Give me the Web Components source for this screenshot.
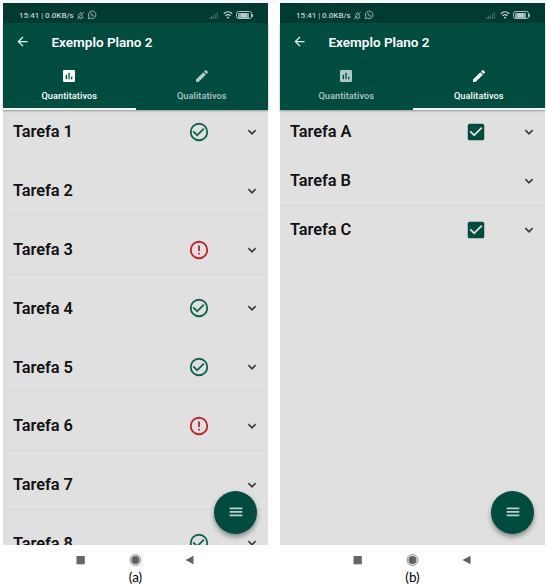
<!DOCTYPE html>
<html lang="pt-BR">
<head>
<meta charset="utf-8">
<title>Exemplo Plano 2</title>
<style>
html,body{margin:0;background:#fff;font-family:Roboto,"Liberation Sans",sans-serif}
body{width:546px;height:587px;overflow:hidden}
</style>
</head>
<body>
<phone-gallery>
  <phone-screen label="(a)" active="0">
    <task-row name="Tarefa 1" state="ok" class="first"></task-row>
    <task-row name="Tarefa 2" class="wide"></task-row>
    <task-row name="Tarefa 3" state="alert" class="wide"></task-row>
    <task-row name="Tarefa 4" state="ok" class="wide"></task-row>
    <task-row name="Tarefa 5" state="ok" class="wide"></task-row>
    <task-row name="Tarefa 6" state="alert" class="wide"></task-row>
    <task-row name="Tarefa 7" class="wide"></task-row>
    <task-row name="Tarefa 8" state="ok" class="wide"></task-row>
  </phone-screen>
  <phone-screen label="(b)" active="1">
    <task-row name="Tarefa A" state="box" class="first"></task-row>
    <task-row name="Tarefa B"></task-row>
    <task-row name="Tarefa C" state="box"></task-row>
  </phone-screen>
</phone-gallery>
<script>
const ICONS = {
  back: '<path d="M20 11H7.83l5.59-5.59L12 4l-8 8 8 8 1.41-1.41L7.83 13H20z"/>',
  chart: '<path d="M19 3H5a2 2 0 0 0-2 2v14a2 2 0 0 0 2 2h14a2 2 0 0 0 2-2V5a2 2 0 0 0-2-2zM9 17H7v-7h2zm4 0h-2V7h2zm4 0h-2v-4h2z"/>',
  pencil: '<path d="M3 17.25V21h3.75L17.81 9.94l-3.75-3.75zM20.71 7.04a1 1 0 0 0 0-1.41l-2.34-2.34a1 1 0 0 0-1.41 0l-1.83 1.83 3.75 3.75z"/>',
  ok: '<path d="M16.59 7.58 10 14.17l-3.59-3.58L5 12l5 5 8-8zM12 2a10 10 0 1 0 0 20 10 10 0 0 0 0-20zm0 18a8 8 0 1 1 0-16 8 8 0 0 1 0 16z"/>',
  alert: '<path d="M11 15h2v2h-2zm0-8h2v6h-2zM12 2a10 10 0 1 0 0 20 10 10 0 0 0 0-20zm0 18a8 8 0 1 1 0-16 8 8 0 0 1 0 16z"/>',
  box: '<path d="M19 3H5a2 2 0 0 0-2 2v14a2 2 0 0 0 2 2h14a2 2 0 0 0 2-2V5a2 2 0 0 0-2-2zm-9 14-5-5 1.41-1.41L10 14.17l7.59-7.59L19 8z"/>',
  chevron: '<path d="M7.41 8.59 12 13.17l4.59-4.58L18 10l-6 6-6-6z" stroke="currentColor" stroke-width=".5"/>',
  menu: '<path d="M2.500 5.200h19v2.700h-19zm0 5.300h19v2.700h-19zm0 5.300h19v2.700h-19z"/>',
  bell: '<g fill="none" stroke="currentColor" stroke-width="2"><path d="M5 18h15M7 18v-7a5 5 0 0 1 10 0v7M10 21h4M12 6V3M3 22 21 2"/></g>',
  whats: '<g fill="none" stroke="currentColor" stroke-width="2.2"><path d="M3 21l1.5-5a9 9 0 1 1 3.7 3.6z"/><path d="M9 8c-1 3 3 8 7 7l0-2-2-1-1 1c-1 0-2-2-2-2l1-1-1-2z" stroke-width="1.5"/></g>',
  signal: '<path d="M1 17h3v4H1zm5-3h3v7H6z"/><path opacity=".6" d="M11 11h3v10h-3zm5-4h3v14h-3zm5-4h3v18h-3z"/>',
  wifi: '<g fill="none" stroke="currentColor" stroke-width="3"><path d="M2 9c6-6 14-6 20 0M6 14c4-4 8-4 12 0"/></g><path d="M8.5 17.500q3.500-3 7 0L12 21z"/>',
};
function define(name, markup, setup) {
  customElements.define(name, class extends HTMLElement {
    connectedCallback() {
      if (this.shadowRoot) return;
      const t = document.createElement('template');
      t.innerHTML = markup;
      this.attachShadow({mode: 'open'}).append(t.content.cloneNode(true));
      if (setup) setup(this, this.shadowRoot);
    }
  });
}
define('ui-icon', `<style>:host{display:block;flex:none;width:16px;height:16px}svg{display:block;width:100%;height:100%;overflow:visible}</style><svg viewBox="0 0 24 24" fill="currentColor"></svg>`,
  (el, root) => { root.querySelector('svg').innerHTML = ICONS[el.getAttribute('name')] || ''; });

define('status-bar', `<style>
:host{display:flex;align-items:center;box-sizing:border-box;height:20px;padding:4px 15px 0 16px;background:#003a30;color:#c3d3cf;font-size:8px;font-weight:500;white-space:nowrap}
.clock{width:54px;letter-spacing:-.02px}.bell{width:9px;height:9px;margin-left:3px;opacity:.8}.wa{width:10px;height:10px;margin-left:2px;opacity:.85}
.sig{width:11px;height:9px;margin-left:auto;opacity:.5}.wifi{width:10px;height:10px;margin-left:4px}
.bat{box-sizing:border-box;width:16px;height:8px;margin-left:3px;border:1px solid #aac0bb;border-radius:2.5px;display:grid;place-items:center;padding:1px}
.bat span{background:#8ba9a3;width:11px;height:4.500px;color:#e2efeb;font-size:5px;line-height:5px;text-align:center}
.tip{width:1.500px;height:3px;background:#aac0bb}
</style><span class="clock">15:41 | 0.0KB/s</span><ui-icon class="bell" name="bell"></ui-icon><ui-icon class="wa" name="whats"></ui-icon>
<ui-icon class="sig" name="signal"></ui-icon><ui-icon class="wifi" name="wifi"></ui-icon><div class="bat"><span>66</span></div><i class="tip"></i>`);

define('tab-item', `<style>
:host{display:flex;flex:1;flex-direction:column;align-items:center;box-sizing:border-box;padding-top:8px;color:#b0c9c4;border-bottom:2px solid transparent;font-size:9.200px;line-height:12px;font-weight:500;letter-spacing:.06px}
:host([on]){color:#fff;border-color:#f2f6f5}
ui-icon{margin-bottom:6px}
</style><ui-icon></ui-icon><slot></slot>`, (el, root) => {
  const i = document.createElement('ui-icon');
  i.setAttribute('name', el.getAttribute('icon'));
  root.querySelector('ui-icon').replaceWith(i);
});

define('task-row', `<style>
:host{display:grid;grid-template-columns:184.5px 22px 1fr 16px;align-items:center;box-sizing:border-box;height:48.75px;padding:0 8.500px 0 10.500px;border-bottom:1px solid #dadada;color:#111}
:host(.first){height:47px;padding-bottom:3px}
:host(.wide){height:58.75px;padding-top:10px}
.name{font-size:16.400px;font-weight:600;line-height:20px;letter-spacing:-.07px;white-space:nowrap;padding-top:1px;margin-left:-.5px}
.state{display:grid;width:22px;height:22px;margin-left:-10.500px}
.state ui-icon{width:22px;height:22px}
.chev{grid-column:4;width:16px;height:16px;color:#333}
.ok{color:#0f6450}.alert{color:#c32129}.box{color:#004d3f}
</style><span class="name"></span><span class="state"></span><ui-icon class="chev" name="chevron"></ui-icon>`, (el, root) => {
  root.querySelector('.name').textContent = el.getAttribute('name');
  const s = el.getAttribute('state');
  if (s) root.querySelector('.state').innerHTML = `<ui-icon class="${s}" name="${s}"></ui-icon>`;
});

define('nav-bar', `<style>
:host{display:flex;align-items:center;justify-content:center;padding-top:6.500px;box-sizing:content-box}
svg{display:block;width:265px;height:14px;overflow:visible}
</style><svg viewBox="0 0 265 14"><rect x="73.500" y="3" width="8.300" height="8.300" fill="#666"/><circle cx="132.500" cy="7" r="5.500" fill="#ddd" stroke="#999"/><circle cx="132.500" cy="7" r="3.900" fill="#606060"/><path d="M182.500 7 190.500 2.700V11.300z" fill="#606060"/></svg>`);

define('phone-screen', `<style>
:host{display:flex;flex-direction:column;width:265px;height:584px}
header{height:87px;display:flex;flex-direction:column;background:#004d3f;box-shadow:0 1px 2px #0005;position:relative;z-index:1}
.bar{display:flex;align-items:center;height:37px;color:#fff;padding-left:11.500px;gap:22px;box-sizing:border-box}
.bar ui-icon{width:15px;height:15px;color:#f0f5f4}
.title{font-size:13.500px;font-weight:600;white-space:nowrap}
.tabs{display:flex;flex:1}
main{position:relative;height:434.500px;overflow:hidden;background:#e0e0e0;flex:none}
.fab{position:absolute;left:211px;top:380.500px;width:43px;height:43px;border-radius:50%;background:#004d3f;color:#b9cfca;display:grid;place-items:center;box-shadow:0 3px 5px #0006}
nav-bar{flex:none;height:18px}
.caption{font:13.500px/17px Lato,"Open Sans",sans-serif;color:#000;text-align:center}
</style><status-bar></status-bar><header><div class="bar"><ui-icon name="back"></ui-icon><span class="title">Exemplo Plano 2</span></div>
<div class="tabs"><tab-item icon="chart">Quantitativos</tab-item><tab-item icon="pencil">Qualitativos</tab-item></div></header>
<main><slot></slot><div class="fab"><ui-icon name="menu"></ui-icon></div></main><nav-bar></nav-bar><div class="caption"></div>`, (el, root) => {
  root.querySelectorAll('tab-item')[+el.getAttribute('active')].setAttribute('on', '');
  root.querySelector('.caption').textContent = el.getAttribute('label');
});
define('phone-gallery', `<style>:host{display:flex;gap:12px;box-sizing:border-box;width:546px;height:587px;padding:3px 1px 0 3px;background:linear-gradient(#f8f9fd 3px,#fff 3px)}</style><slot></slot>`);
</script>
</body>
</html>
